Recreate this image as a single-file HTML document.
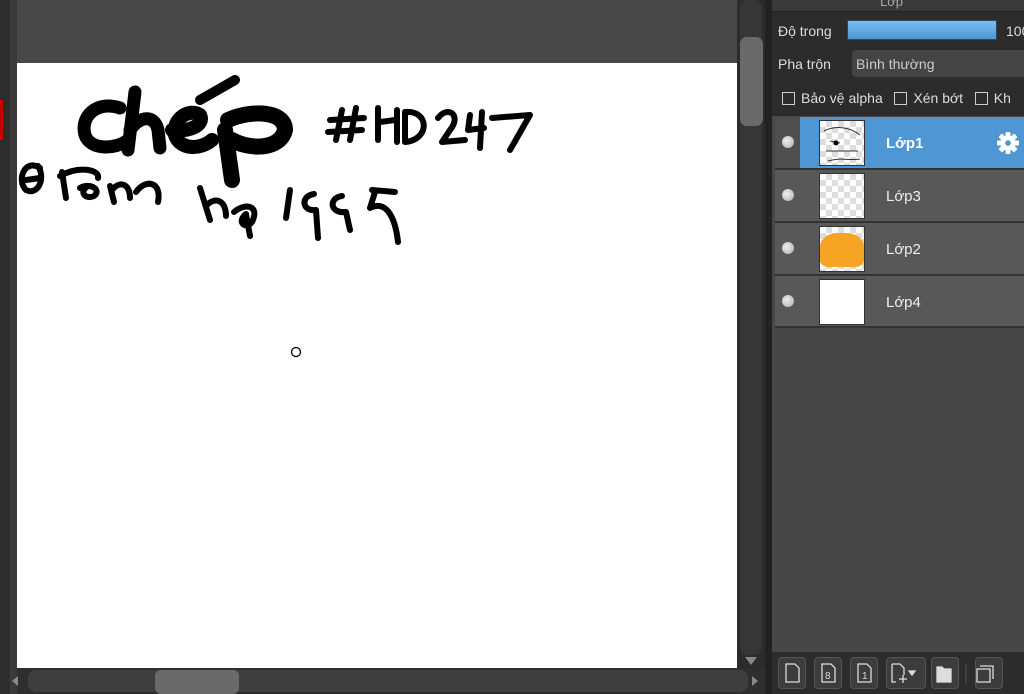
<!DOCTYPE html>
<html><head><meta charset="utf-8"><style>
*{margin:0;padding:0;box-sizing:border-box}
body{width:1024px;height:694px;overflow:hidden;background:#484848;position:relative;font-family:"Liberation Sans","DejaVu Sans",sans-serif;font-size:14px;color:#ddd}
.abs{position:absolute}
.chk{background-color:#fff;background-image:linear-gradient(45deg,#ddd 25%,transparent 25%,transparent 75%,#ddd 75%),linear-gradient(45deg,#ddd 25%,transparent 25%,transparent 75%,#ddd 75%);background-size:12px 12px;background-position:0 0,6px 6px}
.row{position:absolute;left:775px;width:249px;height:51px;background:#585858}
.row .eye{position:absolute;left:7px;top:19px;width:12px;height:12px;border-radius:50%;background:radial-gradient(circle at 40% 40%,#eee,#aaa)}
.row .th{position:absolute;left:44px;top:3px;width:46px;height:46px;border:1px solid #333}
.row .nm{position:absolute;left:111px;top:18px;font-size:15px;color:#eee}
.cb{display:inline-block;width:13px;height:13px;border:1px solid #ccc;vertical-align:-2px;margin-right:6px}
.btn{position:absolute;top:657px;width:28px;height:32px;border-radius:4px;background:#3c3c3c;border:1px solid #555}
</style></head><body>
<div class="abs" style="left:0;top:0;width:10px;height:694px;background:#2d2d2d"></div>
<div class="abs" style="left:0;top:100px;width:3px;height:40px;background:#c00"></div>
<div class="abs" style="left:10px;top:0;width:7px;height:694px;background:#3a3a3a"></div>
<div class="abs" style="left:17px;top:63px;width:720px;height:605px;background:#fff"></div>
<svg class="abs" style="left:0;top:0" width="740" height="400" viewBox="0 0 740 400">
<g fill="none" stroke="#000" stroke-linecap="round" stroke-linejoin="round">
<path stroke-width="13" d="M120 108 C95 100 80 118 85 135 C90 150 115 150 128 140"/>
<path stroke-width="13" d="M135 92 L128 150 M130 130 C140 115 155 115 158 130 L160 148"/>
<path stroke-width="14" d="M172 130 C190 132 205 125 200 115 C190 108 172 118 175 135 C180 150 200 150 212 140"/>
<path stroke-width="10" d="M200 100 L235 80"/>
<path stroke-width="16" d="M225 130 L232 180 M228 120 C250 110 285 110 285 130 C280 150 250 150 232 140"/>
<path stroke-width="6" d="M342 110 L336 140 M356 108 L350 140 M330 120 L364 118 M328 132 L362 130"/>
<path stroke-width="6" d="M378 108 L378 140 M380 122 L395 120 M397 110 L397 142 M405 112 C430 110 430 140 405 142 L405 112"/>
<path stroke-width="6" d="M438 118 C448 105 462 115 450 130 L442 142 L465 140 M470 115 L468 130 L484 128 M482 112 L480 148 M492 118 L530 115 L510 150"/>
<path stroke-width="6" d="M40 168 C25 158 16 180 26 190 C38 196 46 178 38 166 M26 180 L40 178"/>
<path stroke-width="6" d="M62 172 L66 198 M60 176 C80 165 100 170 98 178 M80 188 C90 182 102 190 94 196 C86 200 78 192 88 186 M110 186 L114 202 M112 190 C120 180 130 184 130 198 M136 192 C146 178 162 182 158 202"/>
<path stroke-width="6" d="M200 188 L210 220 M206 206 C215 196 226 200 226 216 M234 212 C246 202 260 206 252 222 C246 230 236 222 246 214 L250 236"/>
<path stroke-width="6" d="M290 190 L286 218 M314 194 C300 196 302 212 316 210 L318 238 M342 196 C328 198 330 214 346 212 L350 230 M372 190 L395 192 M375 192 L370 208 C385 200 395 215 398 242"/>
</g>
<circle cx="296" cy="352" r="4.5" fill="none" stroke="#000" stroke-width="1.3"/>
</svg>
<div class="abs" style="left:17px;top:668px;width:748px;height:26px;background:#2e2e2e"></div>
<div class="abs" style="left:28px;top:670px;width:720px;height:22px;border-radius:8px;background:#3e3e3e"></div>
<div class="abs" style="left:155px;top:670px;width:84px;height:24px;border-radius:6px;background:#6a6a6a"></div>
<div class="abs" style="left:12px;top:676px;border:5px solid transparent;border-right:6px solid #888;border-left:0"></div>
<div class="abs" style="left:752px;top:676px;border:5px solid transparent;border-left:6px solid #888;border-right:0"></div>
<div class="abs" style="left:737px;top:0;width:28px;height:668px;background:#2c2c2c"></div>
<div class="abs" style="left:740px;top:0;width:22px;height:655px;border-radius:8px;background:#363636"></div>
<div class="abs" style="left:740px;top:37px;width:23px;height:89px;border-radius:7px;background:#6a6a6a"></div>
<div class="abs" style="left:745px;top:657px;border:6px solid transparent;border-top:8px solid #888;border-bottom:0"></div>
<div class="abs" style="left:765px;top:0;width:7px;height:694px;background:#222"></div>
<div class="abs" style="left:772px;top:0;width:252px;height:694px;background:#474747"></div>
<div class="abs" style="left:772px;top:0;width:252px;height:116px;background:#2c2c2c"></div>
<div class="abs" style="left:772px;top:0;width:252px;height:12px;background:#3a3a3a;border-bottom:1px solid #222"></div>
<div class="abs" style="left:880px;top:-6px;font-size:13px;color:#aaa">Lớp</div>
<div class="abs" style="left:778px;top:23px">Độ trong</div>
<div class="abs" style="left:847px;top:20px;width:150px;height:20px;background:linear-gradient(#78bdf2,#4f98d6);border:1px solid #345"></div>
<div class="abs" style="left:1006px;top:23px">100</div>
<div class="abs" style="left:778px;top:56px">Pha trộn</div>
<div class="abs" style="left:852px;top:50px;width:180px;height:27px;border-radius:4px;background:#444"></div>
<div class="abs" style="left:856px;top:56px;color:#ccc">Bình thường</div>
<div class="abs" style="left:782px;top:90px;white-space:nowrap"><span class="cb"></span>Bảo vệ alpha &nbsp; <span class="cb"></span>Xén bớt &nbsp; <span class="cb"></span>Kh</div>
<div class="row" style="top:117px;background:#4f4f4f"><div style="position:absolute;left:25px;top:0;width:224px;height:51px;background:#4e97d4"></div><div class="eye"></div><div class="th chk" style="background-color:#fff"><svg width="44" height="44"><path d="M4 10 C15 4 30 6 40 14 M6 30 L38 30 M8 40 C20 36 30 40 40 38 M10 20 L20 22" stroke="#333" fill="none"/><circle cx="16" cy="22" r="2.5"/></svg></div><div class="nm" style="font-weight:bold;color:#fff">Lớp1</div>
<svg style="position:absolute;left:221px;top:14px" width="24" height="24" viewBox="0 0 24 24"><g fill="#fff"><circle cx="12" cy="12" r="7.5"/><rect x="9.5" y="1" width="5" height="22" rx="1"/><rect x="9.5" y="1" width="5" height="22" rx="1" transform="rotate(45 12 12)"/><rect x="9.5" y="1" width="5" height="22" rx="1" transform="rotate(90 12 12)"/><rect x="9.5" y="1" width="5" height="22" rx="1" transform="rotate(135 12 12)"/></g><circle cx="12" cy="12" r="2.8" fill="#4e97d4"/></svg></div>
<div class="row" style="top:170px"><div class="eye"></div><div class="th chk"></div><div class="nm">Lớp3</div></div>
<div class="row" style="top:223px"><div class="eye"></div><div class="th chk"><div style="position:absolute;left:0;top:6px;width:44px;height:34px;background:#f5a424;border-radius:40% 40% 20% 20%"></div></div><div class="nm">Lớp2</div></div>
<div class="row" style="top:276px;height:50px"><div class="eye"></div><div class="th" style="background:#fff"></div><div class="nm">Lớp4</div></div>
<div class="abs" style="left:775px;top:168px;width:249px;height:2px;background:#333"></div>
<div class="abs" style="left:775px;top:221px;width:249px;height:2px;background:#333"></div>
<div class="abs" style="left:775px;top:274px;width:249px;height:2px;background:#333"></div>
<div class="abs" style="left:775px;top:326px;width:249px;height:2px;background:#333"></div>
<div class="abs" style="left:772px;top:652px;width:252px;height:42px;background:#2c2c2c"></div>
<div class="btn" style="left:778px"></div><div class="btn" style="left:814px"></div><div class="btn" style="left:850px"></div><div class="btn" style="left:886px;width:40px"></div><div class="btn" style="left:931px"></div><div class="btn" style="left:975px"></div>
<svg class="abs" style="left:778px;top:657px" width="246" height="32"><g fill="none" stroke="#ddd" stroke-width="1.3"><path d="M8 7 H17 L21 11 V25 H8 Z"/><path d="M44 7 H53 L57 11 V25 H44 Z"/><text x="47" y="22" font-size="10" fill="#ddd" stroke="none" font-family="Liberation Sans">8</text><path d="M80 7 H89 L93 11 V25 H80 Z"/><text x="84" y="22" font-size="10" fill="#ddd" stroke="none" font-family="Liberation Sans">1</text><path d="M114 7 H122 L126 11 V18 M114 7 V25 H118 M121 22 H129 M125 18 V26"/><path d="M131 14 L137 14 L134 18 Z" fill="#ddd"/><path d="M159 10 H164 L166 12 H173 V25 H159 Z" fill="#ddd"/><path d="M202 9 H215 V22 M199 12 H212 V25 H199 Z"/></g><path d="M188 8 V26" stroke="#555"/></svg>
</body></html>
